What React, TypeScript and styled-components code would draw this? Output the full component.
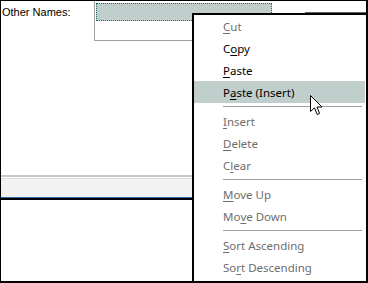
import { Fragment } from "react";
import styled, { createGlobalStyle } from "styled-components";

const GlobalStyle = createGlobalStyle`
  html, body {
    margin: 0;
    padding: 0;
    background: #ffffff;
    overflow: hidden;
  }
`;

const Frame = styled.div`
  position: relative;
  box-sizing: border-box;
  width: 368px;
  height: 283px;
  border-style: solid;
  border-color: #000;
  border-width: 1px 2px 2px 1px;
  background: #fff;
  overflow: hidden;
  display: flex;
  flex-direction: column;
`;

const TopRow = styled.div`
  display: flex;
  align-items: flex-start;
  height: 40px;
`;

const FieldLabel = styled.div`
  width: 93px;
  padding: 5px 0 0 1px;
  box-sizing: border-box;
  font-family: "Liberation Sans", Arial, sans-serif;
  font-size: 11px;
  color: #000;
`;

const NamesGrid = styled.div`
  box-sizing: border-box;
  width: 211px;
  height: 40px;
  border-left: 1px solid #a0a0a0;
  border-bottom: 1px solid #a0a0a0;
  padding: 2px 0 0 1px;
`;

const SelectedCell = styled.div`
  box-sizing: border-box;
  width: 176px;
  height: 18px;
  background: #c0cfcb;
  border: 1px dotted #1e6e6e;
`;

const DarkEdge = styled.div`
  flex: 1;
  height: 3px;
  margin-top: 11px;
  background: #5f5f5f;
`;

const Band = styled.div`
  margin-top: 134px;
  border-top: 2px solid #c8c8c8;
  padding-top: 1px;
`;

const BandFace = styled.div`
  height: 18px;
  background: #f2f2f2;
  border-top: 1px solid #dcdcdc;
  border-bottom: 1px solid #2a6aa8;
`;

const BandShadow = styled.div`
  height: 2px;
  background: #000;
`;

const Menu = styled.div`
  position: absolute;
  left: 191px;
  top: 12px;
  right: 0;
  bottom: 0;
  background: #fff;
  border-left: 2px solid #000;
  border-top: 2px solid #000;
  display: flex;
  flex-direction: column;
  font-family: "Noto Sans", "Open Sans", sans-serif;
  font-size: 11.5px;
`;

const MenuItem = styled.div<{ $disabled?: boolean; $hot?: boolean }>`
  height: 22px;
  display: flex;
  align-items: center;
  padding-left: 29px;
  margin: 0 1px 0 0;
  color: ${({ $disabled }) => ($disabled ? "#6d6d6d" : "#000")};
  background: ${({ $hot }) => ($hot ? "#c0cfcb" : "transparent")};
  white-space: pre;

  u {
    text-decoration: underline;
    text-underline-offset: 2px;
  }
`;

const Separator = styled.div`
  height: 1px;
  margin: 3px 4px 3px 29px;
  background: #a0a0a0;
`;

const Cursor = styled.svg`
  position: absolute;
  left: 309px;
  top: 94px;
`;

type Entry =
  | { sep: true }
  | { pre: string; key: string; post: string; disabled?: boolean; hot?: boolean };

const entries: Entry[] = [
  { pre: "", key: "C", post: "ut", disabled: true },
  { pre: "C", key: "o", post: "py" },
  { pre: "", key: "P", post: "aste" },
  { pre: "P", key: "a", post: "ste (Insert)", hot: true },
  { sep: true },
  { pre: "", key: "I", post: "nsert", disabled: true },
  { pre: "", key: "D", post: "elete", disabled: true },
  { pre: "C", key: "l", post: "ear", disabled: true },
  { sep: true },
  { pre: "", key: "M", post: "ove Up", disabled: true },
  { pre: "Mo", key: "v", post: "e Down", disabled: true },
  { sep: true },
  { pre: "", key: "S", post: "ort Ascending", disabled: true },
  { pre: "So", key: "r", post: "t Descending", disabled: true },
];

export default function App() {
  return (
    <>
      <GlobalStyle />
      <Frame>
        <TopRow>
          <FieldLabel>Other Names:</FieldLabel>
          <NamesGrid>
            <SelectedCell />
          </NamesGrid>
          <DarkEdge />
        </TopRow>
        <Band>
          <BandFace />
          <BandShadow />
        </Band>

        <Menu>
          {entries.map((e, i) =>
            "sep" in e ? (
              <Separator key={i} />
            ) : (
              <Fragment key={i}>
                <MenuItem $disabled={e.disabled} $hot={e.hot}>
                  {e.pre}
                  <u>{e.key}</u>
                  {e.post}
                </MenuItem>
              </Fragment>
            )
          )}
        </Menu>

        <Cursor width="13" height="21" viewBox="0 0 13 21">
          <path
            d="M0.5 0.5 V16.5 L4.5 12.8 L7.2 19.5 L9.6 18.5 L7 12 H12 Z"
            fill="#fff"
            stroke="#000"
            strokeWidth="1"
            strokeLinejoin="miter"
          />
        </Cursor>
      </Frame>
    </>
  );
}
